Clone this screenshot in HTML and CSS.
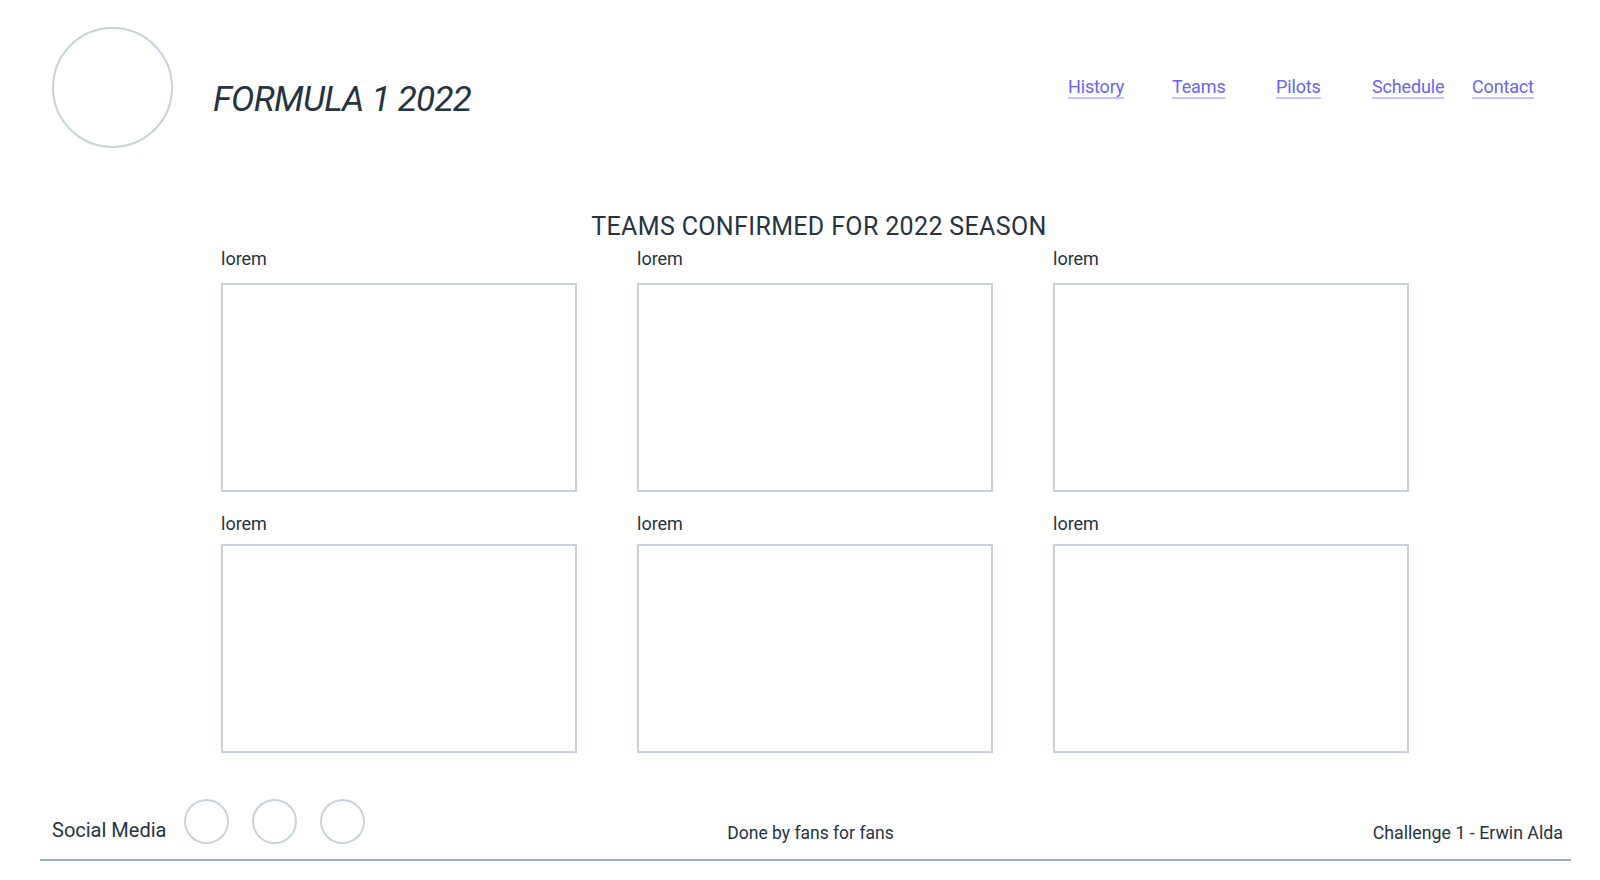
FILE: index.html
```html
<!DOCTYPE html>
<html lang="en">
<head>
<meta charset="utf-8">
<title>Formula 1 2022</title>
<link rel="stylesheet" href="styles.css">
</head>
<body>
<header class="header">
  <div class="logo"></div>
  <h1 class="title">FORMULA 1 2022</h1>
  <nav class="nav">
    <a class="nav-link nav-link--history" href="#">History</a>
    <a class="nav-link nav-link--teams" href="#">Teams</a>
    <a class="nav-link nav-link--pilots" href="#">Pilots</a>
    <a class="nav-link nav-link--schedule" href="#">Schedule</a>
    <a class="nav-link nav-link--contact" href="#">Contact</a>
  </nav>
</header>
<main class="main">
  <h2 class="section-title">TEAMS CONFIRMED FOR 2022 SEASON</h2>
  <div class="grid">
    <div class="team"><p class="team-label">lorem</p><div class="team-card"></div></div>
    <div class="team"><p class="team-label">lorem</p><div class="team-card"></div></div>
    <div class="team"><p class="team-label">lorem</p><div class="team-card"></div></div>
    <div class="team"><p class="team-label team-label--tight">lorem</p><div class="team-card"></div></div>
    <div class="team"><p class="team-label team-label--tight">lorem</p><div class="team-card"></div></div>
    <div class="team"><p class="team-label team-label--tight">lorem</p><div class="team-card"></div></div>
  </div>
</main>
<footer class="footer">
  <div class="footer-social">
    <span class="footer-social-label">Social Media</span>
    <span class="social-icon"></span>
    <span class="social-icon"></span>
    <span class="social-icon"></span>
  </div>
  <p class="footer-center">Done by fans for fans</p>
  <p class="footer-right">Challenge 1 - Erwin Alda</p>
</footer>
</body>
</html>
```
FILE: styles.css
```css
* { box-sizing: border-box; }
html, body { margin: 0; padding: 0; background: #ffffff; }
body {
  font-family: Roboto, "Liberation Sans", sans-serif;
  color: #263340;
  width: 1600px;
  height: 880px;
  overflow: hidden;
}

.header {
  display: flex;
  align-items: flex-start;
  padding: 27px 68px 0 52px;
  height: 212px;
}
.logo {
  width: 121px;
  height: 121px;
  border: 2px solid #c7d2dc;
  border-radius: 50%;
  flex: none;
}
.title {
  margin: 53px 0 0 40px;
  font-size: 35px;
  line-height: 40px;
  font-weight: 400;
  font-style: italic;
  letter-spacing: -0.7px;
  color: #263340;
}
.nav {
  display: flex;
  margin: 48px 0 0 auto;
}
.nav-link {
  display: block;
  font-size: 18px;
  line-height: 24px;
  letter-spacing: -0.15px;
  color: #6b63f6;
  text-decoration: underline;
  text-decoration-color: #c4c1fb;
  text-decoration-thickness: 2px;
  text-underline-offset: 4px;
}
.nav-link--history { width: 104px; }
.nav-link--teams { width: 104px; }
.nav-link--pilots { width: 96px; }
.nav-link--schedule { width: 100px; }
.nav-link--contact { width: 60px; }

.main {
  padding-left: 221px;
}
.section-title {
  width: 1188px;
  margin: 0 0 6px;
  text-align: center;
  font-size: 25px;
  line-height: 30px;
  font-weight: 400;
  letter-spacing: 0.35px;
  padding-left: 8px;
}
.grid {
  display: grid;
  grid-template-columns: repeat(3, 356px);
  column-gap: 60px;
  row-gap: 21px;
}
.team-label {
  margin: 0 0 13px;
  font-size: 18px;
  line-height: 22px;
}
.team-label--tight {
  margin-bottom: 9px;
}
.team-card {
  height: 209px;
  border: 2px solid #c7d2dc;
}

.footer {
  margin: 36px 29px 0 40px;
  height: 72px;
  border-bottom: 2px solid #9eadba;
  display: grid;
  grid-template-columns: 1fr auto 1fr;
  align-items: start;
  padding: 0 8px 0 12px;
}
.footer-social {
  display: flex;
  align-items: flex-start;
  gap: 23px;
}
.footer-social-label {
  font-size: 20px;
  line-height: 24px;
  margin-top: 29px;
  margin-right: -5px;
}
.social-icon {
  width: 45px;
  height: 45px;
  margin-top: 10px;
  border: 2px solid #c7d2dc;
  border-radius: 50%;
}
.footer-center {
  margin: 32px 0 0 6px;
  font-size: 17.5px;
  line-height: 24px;
}
.footer-right {
  margin: 32px 0 0;
  justify-self: end;
  font-size: 17.8px;
  line-height: 24px;
}
```
